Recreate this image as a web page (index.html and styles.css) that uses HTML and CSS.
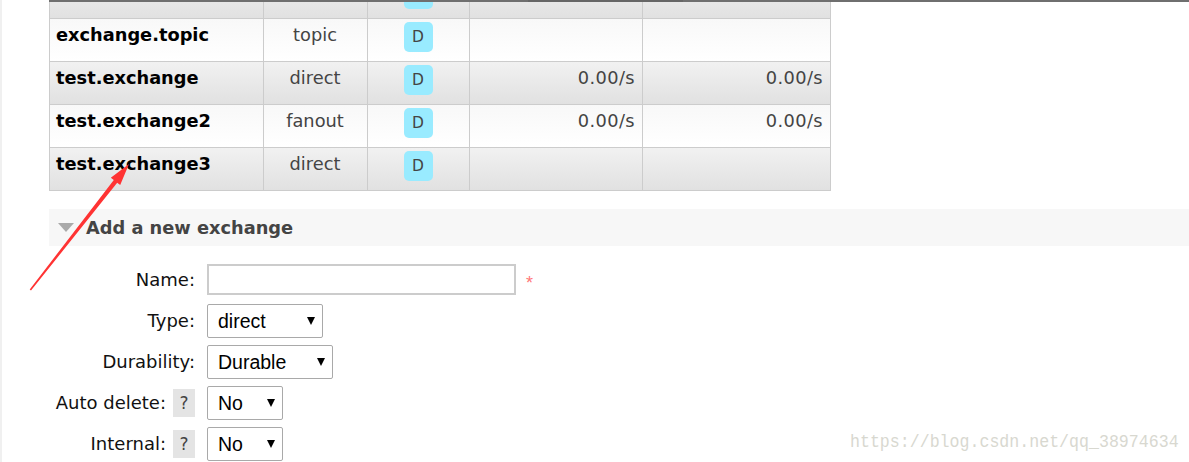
FILE: index.html
```html
<!DOCTYPE html>
<html lang="en">
<head>
  <meta charset="UTF-8">
  <title>Exchanges</title>
  <link rel="stylesheet" href="styles.css">
</head>
<body>
  <div class="page">
    <div class="topbar"><div class="topbar-tab"></div></div>

    <div class="list-wrap">
      <table class="list">
        <colgroup>
          <col class="col-name">
          <col class="col-type">
          <col class="col-features">
          <col class="col-rate">
          <col class="col-rate-out">
        </colgroup>
        <!-- row scrolled out of view, only its bottom edge shows -->
        <tr class="alt2">
          <td class="name"></td>
          <td class="type"></td>
          <td class="features"><span class="badge"></span></td>
          <td class="rate"></td>
          <td class="rate"></td>
        </tr>
        <tr class="alt1">
          <td class="name">exchange.topic</td>
          <td class="type">topic</td>
          <td class="features"><span class="badge">D</span></td>
          <td class="rate"></td>
          <td class="rate"></td>
        </tr>
        <tr class="alt2">
          <td class="name">test.exchange</td>
          <td class="type">direct</td>
          <td class="features"><span class="badge">D</span></td>
          <td class="rate">0.00/s</td>
          <td class="rate">0.00/s</td>
        </tr>
        <tr class="alt1">
          <td class="name">test.exchange2</td>
          <td class="type">fanout</td>
          <td class="features"><span class="badge">D</span></td>
          <td class="rate">0.00/s</td>
          <td class="rate">0.00/s</td>
        </tr>
        <tr class="alt2">
          <td class="name">test.exchange3</td>
          <td class="type">direct</td>
          <td class="features"><span class="badge">D</span></td>
          <td class="rate"></td>
          <td class="rate"></td>
        </tr>
      </table>
    </div>

    <div class="section">
      <h2 class="section-head"><span class="toggle"></span>Add a new exchange</h2>
      <form class="form">
        <label class="form-label" for="ex-name">Name:</label>
        <div class="form-field">
          <input id="ex-name" class="text-input" type="text">
          <span class="mand">*</span>
        </div>

        <label class="form-label" for="ex-type">Type:</label>
        <div class="form-field">
          <span class="select-wrap select-type">
            <select id="ex-type">
              <option>direct</option>
              <option>fanout</option>
              <option>headers</option>
              <option>topic</option>
            </select>
          </span>
        </div>

        <label class="form-label" for="ex-durable">Durability:</label>
        <div class="form-field">
          <span class="select-wrap select-durable">
            <select id="ex-durable">
              <option>Durable</option>
              <option>Transient</option>
            </select>
          </span>
        </div>

        <div class="form-label"><label for="ex-autodelete">Auto delete:</label><span class="help">?</span></div>
        <div class="form-field">
          <span class="select-wrap select-yesno">
            <select id="ex-autodelete">
              <option>No</option>
              <option>Yes</option>
            </select>
          </span>
        </div>

        <div class="form-label"><label for="ex-internal">Internal:</label><span class="help">?</span></div>
        <div class="form-field">
          <span class="select-wrap select-yesno">
            <select id="ex-internal">
              <option>No</option>
              <option>Yes</option>
            </select>
          </span>
        </div>
      </form>
    </div>

    <!-- annotation drawn on top of the screenshot -->
    <svg class="pointer" width="1189" height="462" viewBox="0 0 1189 462">
      <polygon fill="#f33" points="27.7,289.5 111.8,180 108.8,177.7 127,164 118.2,185.1 115.2,182.8 29,290.5"/>
    </svg>

    <div class="watermark">https://blog.csdn.net/qq_38974634</div>
  </div>
</body>
</html>
```

FILE: styles.css
```css
* {
  box-sizing: border-box;
}

body {
  margin: 0;
  font-family: "DejaVu Sans", Verdana, sans-serif;
  background: #fff;
}

.page {
  position: relative;
  height: 462px;
  overflow: hidden;
  border-left: 2px solid #f0f0f0;
  padding-left: 47px;
}

/* dark rule along the top */
.topbar {
  height: 2px;
  background: #6f6f6f;
}

.topbar-tab {
  margin-left: 479px;
  width: 155px;
  height: 3px;
  background: #666;
}

/* exchanges list */
.list-wrap {
  overflow: hidden;
}

table.list {
  margin-top: -26px;
  width: 782px;
  table-layout: fixed;
  border-collapse: separate;
  border-spacing: 0;
  border-left: 1px solid #ccc;
  font-size: 17.8px;
}

.col-name { width: 214px; }
.col-type { width: 104px; }
.col-features { width: 102px; }
.col-rate { width: 173px; }
.col-rate-out { width: 188px; }

table.list tr {
  height: 43px;
}

table.list td {
  border-right: 1px solid #ccc;
  border-bottom: 1px solid #ccc;
  padding: 5px 7px 0 6px;
  vertical-align: top;
  color: #444;
  white-space: nowrap;
}

table.list tr.alt1 td {
  background: linear-gradient(#f8f8f8, #fff);
}

table.list tr.alt2 td {
  background: linear-gradient(#f1f1f1, #e1e1e1);
}

td.name {
  font-weight: bold;
  color: #000 !important;
}

td.type {
  text-align: center;
}

td.rate {
  text-align: right;
  letter-spacing: 0.4px;
}

.badge {
  display: block;
  width: 29px;
  height: 30px;
  margin: -2px auto 0;
  border-radius: 5px;
  background: #99ebff;
  color: #444;
  font-size: 15.5px;
  line-height: 30px;
  text-align: center;
}

/* add exchange section */
.section-head {
  display: flex;
  align-items: center;
  gap: 12px;
  height: 37px;
  margin: 18px 0 0;
  padding-left: 9px;
  background: #f7f7f7;
  color: #444;
  font-size: 17.8px;
  font-weight: bold;
}

.toggle {
  width: 0;
  height: 0;
  border-left: 8.5px solid transparent;
  border-right: 8.5px solid transparent;
  border-top: 9px solid #aaa;
}

.form {
  display: grid;
  grid-template-columns: 146px 1fr;
  grid-auto-rows: 41px;
  column-gap: 12px;
  align-items: center;
  margin-top: 13px;
  font-size: 18px;
  color: #111;
}

.form-label {
  display: flex;
  justify-content: flex-end;
  align-items: center;
}

.help {
  width: 22px;
  height: 28px;
  margin-left: 7px;
  background: #e4e4e4;
  color: #444;
  font-size: 17px;
  line-height: 28px;
  text-align: center;
}

.form-field {
  display: flex;
  align-items: center;
}

.text-input {
  width: 309px;
  height: 31px;
  border: 2px solid #ccc;
  background: #fff;
  font: 18px "Liberation Sans", Arial, sans-serif;
}

.mand {
  align-self: flex-start;
  margin: 9px 0 0 10px;
  color: #f77;
  font: 18px "Liberation Sans", Arial, sans-serif;
}

.select-wrap {
  position: relative;
  display: inline-block;
}

.select-wrap::after {
  content: "";
  position: absolute;
  right: 8px;
  top: 13px;
  border-left: 4.5px solid transparent;
  border-right: 4.5px solid transparent;
  border-top: 8px solid #000;
  pointer-events: none;
}

.select-wrap select {
  appearance: none;
  -webkit-appearance: none;
  display: block;
  height: 34px;
  padding: 0 0 0 10px;
  border: 1px solid #a9a9a9;
  border-radius: 2px;
  background: #fff;
  color: #000;
  font: 19.5px "Liberation Sans", Arial, sans-serif;
}

.select-type select { width: 116px; }
.select-durable select { width: 126px; }
.select-yesno select { width: 76px; }

/* overlays */
.pointer {
  position: absolute;
  left: 0;
  top: 0;
  pointer-events: none;
}

.watermark {
  position: absolute;
  left: 848px;
  top: 434px;
  color: #d8d8d0;
  font: 16.6px/1 "Liberation Mono", monospace;
  white-space: nowrap;
  transform: scaleY(1.15);
}
```
